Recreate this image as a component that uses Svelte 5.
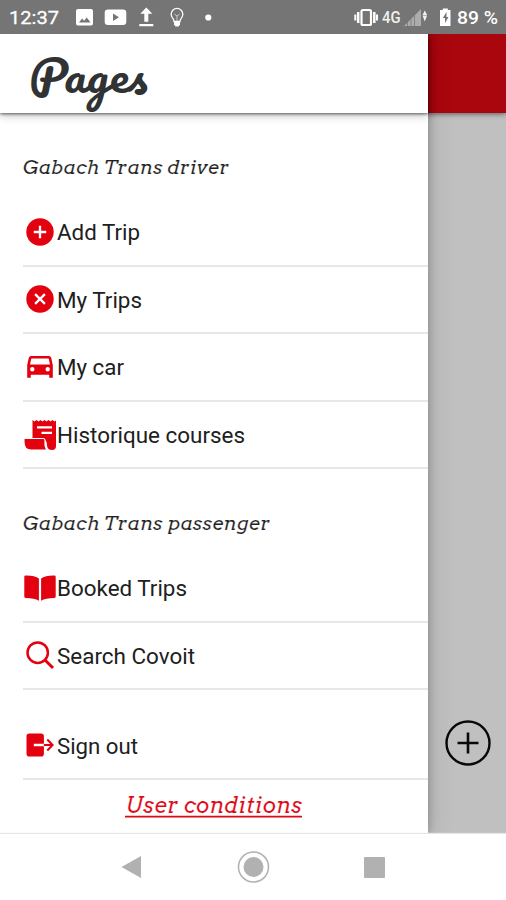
<script>
  const driver = [
    { icon: 'add', label: 'Add Trip', width: 83 },
    { icon: 'close', label: 'My Trips', width: 85 },
    { icon: 'car', label: 'My car', width: 67 },
    { icon: 'receipt', label: 'Historique courses', width: 188 }
  ];
  const passenger = [
    { icon: 'book', label: 'Booked Trips', width: 130 },
    { icon: 'search', label: 'Search Covoit', width: 138 }
  ];
</script>

{#snippet glyph(name)}
  <svg class="icon" width="34" height="34" viewBox="0 0 34 34" fill="#e3000f">
    {#if name === 'add'}
      <circle cx="17" cy="17" r="13.7" />
      <path d="M17 10.8v12.4M10.8 17h12.4" stroke="#fff" stroke-width="2.3" />
    {:else if name === 'close'}
      <circle cx="17" cy="17" r="13.7" />
      <path d="M12.1 12.1l9.8 9.8M21.9 12.1l-9.8 9.8" stroke="#fff" stroke-width="2.3" />
    {:else if name === 'car'}
      <path fill-rule="evenodd" d="M8.2 6h17.6q1.8 0 2.3 1.6L29.8 15v12.8h-3.6v-3H7.8v3H4.2V15l1.7-7.4Q6.4 6 8.2 6zM8.3 8.5L7 14.4h20l-1.3-5.9zM9.3 17a2.2 2.2 0 1 0 0 4.4 2.2 2.2 0 0 0 0-4.4zM24.7 17a2.2 2.2 0 1 0 0 4.4 2.2 2.2 0 0 0 0-4.4z" />
    {:else if name === 'receipt'}
      <path fill-rule="evenodd" d="M9.5 2l2 1.6 2-1.6 2 1.6 2-1.6 2 1.6 2-1.6 2 1.6 2-1.6 2 1.6 2-1.6 2 1.6 1.5-1.2V28q0 4-4 4-4.5 0-5-4.5 0-6-4-6H9.5zM14 8.2v2.3h15V8.2zM18.5 13.8v2.3H29v-2.3z" />
      <path d="M1.5 20.5h18.5q2 0 2 2v4.5q.3 3 2 5H8q-7 0-7-8v-2q0-1.5.5-1.5z" stroke="#fff" stroke-width="1.1" />
    {:else if name === 'book'}
      <path d="M1.3 5.8Q1.3 4.5 2.6 4.5q9-.2 13.3 3v22.2q-4.3-2.8-13.3-2.8-1.3 0-1.3-1.3zM32.7 5.8q0-1.3-1.3-1.3-9-.2-13.3 3v22.2q4.3-2.8 13.3-2.8 1.3 0 1.3-1.3z" />
    {:else if name === 'search'}
      <circle cx="14.7" cy="14.7" r="10.2" fill="none" stroke="#e3000f" stroke-width="2.5" />
      <path d="M22 22l8 8" stroke="#e3000f" stroke-width="3" />
    {:else if name === 'exit'}
      <path d="M6.3 5.5h11.8q2.8 0 2.8 2.8v7.5H10.8v2.4h10.1v7.5q0 2.8-2.8 2.8H6.3q-2.8 0-2.8-2.8V8.3q0-2.8 2.8-2.8z" />
      <path d="M20.9 17h8M24.3 11.5l5.3 5.5-5.3 5.5" fill="none" stroke="#e3000f" stroke-width="2" />
    {/if}
  </svg>
{/snippet}

{#snippet fitted(text, width)}
  <svg class="label" width={width + 4} height="32">
    <text x="0" y="23.6" textLength={width} lengthAdjust="spacingAndGlyphs">{text}</text>
  </svg>
{/snippet}

{#snippet row(item)}
  <li class="row">{@render glyph(item.icon)}{@render fitted(item.label, item.width)}</li>
{/snippet}

<div class="screen">
  <div class="status">
    <svg width="506" height="34" fill="#fff">
      <text x="9" y="24" font-size="18.5" font-weight="400" stroke="#fff" stroke-width=".3" textLength="50" lengthAdjust="spacingAndGlyphs">12:37</text>
      <path fill-rule="evenodd" d="M78 9h13q2 0 2 2v12.5q0 2-2 2H78q-2 0-2-2V11q0-2 2-2zM79 22.5h11.5l-3.7-5-2.7 3.3-2-2.4z" />
      <path fill-rule="evenodd" d="M108 9.5h15q3.3 0 3.3 3.3v9q0 3.3-3.3 3.3h-15q-3.3 0-3.3-3.3v-9q0-3.3 3.3-3.3zM113 13.5v7.5l6-3.7z" />
      <path d="M146.3 7.5l6 6.3h-4v8h-4v-8h-4zM139.3 24h14v2.3h-14z" />
      <path d="M174 21.5q0-2-1.5-3.6a5.8 5.8 0 1 1 9 0Q180 19.5 180 21.5z" fill="none" stroke="#fff" stroke-width="1.3" />
      <path d="M174.3 14l2.7 2 2.7-2M177 16v5" fill="none" stroke="#fff" opacity=".6" />
      <path d="M174 22h6v2.5l-1.5 2h-3l-1.5-2z" />
      <circle cx="208.3" cy="17.5" r="3.1" />
      <rect x="361.5" y="10" width="9.5" height="15" rx="1.5" fill="none" stroke="#fff" stroke-width="2.2" />
      <path d="M358.2 12v11M374.3 12v11" stroke="#fff" stroke-width="2.5" />
      <path d="M355.3 14.5v6M377 14.5v6" stroke="#fff" stroke-width="2" />
      <text x="382" y="23.3" font-size="16" font-weight="500" opacity=".9" textLength="18.5" lengthAdjust="spacingAndGlyphs">4G</text>
      <path d="M404 26l17-17v17z" opacity=".4" />
      <path d="M407.5 22v4M411 19v7M414.5 15.5v10.5" stroke="#767676" stroke-width=".8" />
      <path d="M422.5 15l2.3-4.5 2.3 4.5zM422.5 15.5l2.3 6 2.3-6z" opacity=".9" />
      <path fill-rule="evenodd" d="M442.8 8.5h5V10h2.7v16h-10.5V10h2.8zM446.5 12l-3.7 6h2.2v5l3.5-6h-2z" />
      <text x="457" y="24" font-size="18.5" font-weight="500" textLength="41" lengthAdjust="spacingAndGlyphs">89 %</text>
    </svg>
  </div>

  <div class="stage">
    <main class="page">
      <header class="appbar"></header>
      <div class="content">
        <svg class="fab" width="46" height="46" fill="none" stroke="#090909">
          <circle cx="23" cy="23" r="21.5" stroke-width="2.4" />
          <path d="M23 12.5v21M12.5 23h21" stroke-width="2.6" />
        </svg>
      </div>
    </main>

    <aside class="drawer">
      <header class="title">
        <svg width="170" height="79">
          <text x="29" y="58.5" textLength="118.5" lengthAdjust="spacingAndGlyphs">Pages</text>
        </svg>
      </header>
      <h2 class="first"><svg width="260" height="34"><text x="0" y="23" textLength="206">Gabach Trans driver</text></svg></h2>
      <ul>{#each driver as item}{@render row(item)}{/each}</ul>
      <h2 class="second"><svg width="260" height="34"><text x="0" y="23.6" textLength="247">Gabach Trans passenger</text></svg></h2>
      <ul>{#each passenger as item}{@render row(item)}{/each}</ul>
      <ul class="leave">{@render row({ icon: 'exit', label: 'Sign out', width: 81 })}</ul>
      <a class="terms" href="#terms">
        <svg width="178" height="32">
          <text x="1" y="21.6" textLength="176">User conditions</text>
          <path d="M0 25.6h177" stroke="#dc0714" stroke-width="1.7" />
        </svg>
      </a>
    </aside>
  </div>

  <nav>
    <svg width="506" height="66" fill="#b1b1b1">
      <path d="M121.5 33L141 22v22z" />
      <circle cx="253.500" cy="33" r="15" fill="none" stroke="#b1b1b1" stroke-width="1.5" />
      <circle cx="253.500" cy="33" r="10" />
      <rect x="364" y="23" width="21" height="21" rx="1" />
    </svg>
  </nav>
</div>

<style>
  :global(body) { margin: 0; background: #fff; }
  .screen { display: flex; flex-direction: column; width: 506px; height: 900px; overflow: hidden; font-family: Roboto, sans-serif; background: #fff; }
  svg { display: block; flex: none; }
  .status { height: 34px; background: #757575; }
  .stage { display: grid; height: 800px; overflow: hidden; }
  .page, .drawer { grid-area: 1 / 1; }
  .page { display: flex; flex-direction: column; background: #c0c0c0; }
  .appbar { height: 79px; background: #aa060e; box-shadow: 0 1px 5px #0008; }
  .content { flex: 1; display: flex; align-items: flex-end; justify-content: flex-end; padding: 0 15px 68px 0; }
  .drawer { width: 428.4px; height: 800px; z-index: 1; background: #fff; box-shadow: 1px 0 8px #0003, 2px 0 24px #0002; }
  .title { height: 79px; margin-bottom: 38px; box-shadow: 0 1px 3px #0009, 0 3px 9px #0003; }
  .title text { font: 400 43.5px Pacifico, "Liberation Serif", cursive; fill: #303234; }
  h2 { margin: 0 0 0 23px; height: 48px; }
  h2 text { font: italic 400 19.5px Arvo, "Zilla Slab", "Roboto Slab", "DejaVu Serif", serif; fill: #202020; stroke: #fff; stroke-width: .2px; }
  ul { list-style: none; margin: 0; padding: 0 0 0 23px; }
  .row { box-sizing: border-box; display: flex; align-items: center; height: 67.6px; border-bottom: 2px solid #e7e7e7; }
  .label { margin-top: 1px; }
  .label text { font-size: 22.5px; fill: #202020; }
  .second { margin-top: 36.6px; height: 49px; }
  .leave { padding-top: 22.3px; }
  .terms { display: flex; justify-content: center; margin-top: 11px; }
  .terms text { font: italic 400 22px Arvo, "Zilla Slab", "Roboto Slab", "DejaVu Serif", serif; fill: #dc0714; stroke: #fff; stroke-width: .2px; }
  nav { height: 66px; box-shadow: 0 -1px 1px #e5e5e5; z-index: 2; background: #fff; }
</style>
